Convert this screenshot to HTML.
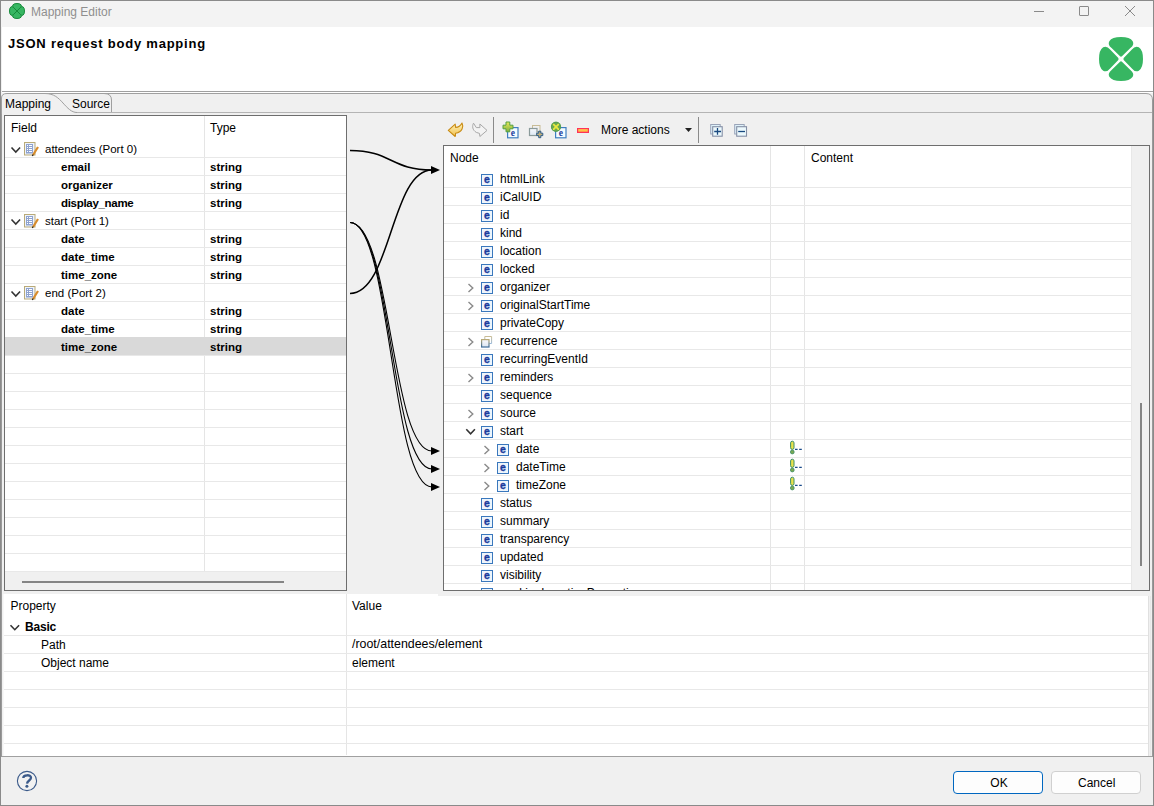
<!DOCTYPE html><html><head><meta charset="utf-8"><style>
html,body{margin:0;padding:0}
body{width:1154px;height:806px;overflow:hidden;position:relative;background:#f0f0f0;font-family:"Liberation Sans",sans-serif}
.t{position:absolute;white-space:nowrap;line-height:20px}
.r{position:absolute;box-sizing:border-box}
svg.r{overflow:visible}
</style></head><body>
<div class="r" style="left:0px;top:0px;width:1154px;height:806px;background:#f0f0f0"></div>
<div class="r" style="left:1px;top:1px;width:1152px;height:26px;background:#f3f3f3"></div>
<div class="r" style="left:2px;top:27px;width:1151px;height:64px;background:#fff"></div>
<div class="r" style="left:2px;top:91px;width:1151px;height:1px;background:#a0a0a0"></div>
<div class="r" style="left:2px;top:92px;width:1151px;height:1px;background:#fff"></div>
<div class="r" style="left:0px;top:0px;width:1154px;height:1px;background:#8a8a8a"></div>
<div class="r" style="left:0px;top:0px;width:1px;height:806px;background:#8a8a8a"></div>
<div class="r" style="left:1px;top:98px;width:1px;height:659px;background:#9a9a9a"></div>
<div class="r" style="left:1153px;top:0px;width:1px;height:806px;background:#8a8a8a"></div>
<div class="r" style="left:1152px;top:99px;width:1px;height:658px;background:#9a9a9a"></div>
<div class="r" style="left:0px;top:805px;width:1154px;height:1px;background:#8a8a8a"></div>
<svg class="r" style="left:0px;top:0px" width="60" height="30" viewBox="0 0 60 30"><g transform="translate(9,3) scale(0.3404255319148936) translate(1.5,1.5)"><path d="M11 11 Q7.8 7.8 10 4 Q13 0 22 0 Q31 0 34 4 Q36.2 7.8 33 11 L22 22 Z" fill="#37b662" stroke="#15893a" stroke-width="2.9" stroke-linejoin="round" transform="rotate(0 22 22)"/><path d="M11 11 Q7.8 7.8 10 4 Q13 0 22 0 Q31 0 34 4 Q36.2 7.8 33 11 L22 22 Z" fill="#37b662" stroke="#15893a" stroke-width="2.9" stroke-linejoin="round" transform="rotate(90 22 22)"/><path d="M11 11 Q7.8 7.8 10 4 Q13 0 22 0 Q31 0 34 4 Q36.2 7.8 33 11 L22 22 Z" fill="#37b662" stroke="#15893a" stroke-width="2.9" stroke-linejoin="round" transform="rotate(180 22 22)"/><path d="M11 11 Q7.8 7.8 10 4 Q13 0 22 0 Q31 0 34 4 Q36.2 7.8 33 11 L22 22 Z" fill="#37b662" stroke="#15893a" stroke-width="2.9" stroke-linejoin="round" transform="rotate(270 22 22)"/></g></svg>
<div class="t" style="left:31px;top:2.03px;font-size:12px;font-weight:400;color:#8f8f8f;letter-spacing:0px;">Mapping Editor</div>
<div class="r" style="left:1034px;top:11px;width:10px;height:1px;background:#8a8a8a"></div>
<div class="r" style="left:1079px;top:6px;width:10px;height:10px;border:1px solid #8a8a8a;border-radius:1px"></div>
<svg class="r" style="left:1124px;top:5px" width="12" height="12" viewBox="0 0 12 12"><path d="M1 1 L11 11 M11 1 L1 11" stroke="#8a8a8a" stroke-width="1"/></svg>
<div class="t" style="left:8px;top:33.70px;font-size:13px;font-weight:700;color:#000;letter-spacing:0.78px;">JSON request body mapping</div>
<svg class="r" style="left:1099px;top:37px" width="44" height="44" viewBox="0 0 44 44"><g transform="translate(0,0) scale(1.0)"><path d="M12.6 11.1 Q8.4 7.8 10.3 4.2 Q13 0 22 0 Q31 0 33.7 4.2 Q35.6 7.8 31.4 11.1 L23.2 19.1 Q22 20.2 20.8 19.1 Z" fill="#37b662" transform="rotate(0 22 22)"/><path d="M12.6 11.1 Q8.4 7.8 10.3 4.2 Q13 0 22 0 Q31 0 33.7 4.2 Q35.6 7.8 31.4 11.1 L23.2 19.1 Q22 20.2 20.8 19.1 Z" fill="#37b662" transform="rotate(90 22 22)"/><path d="M12.6 11.1 Q8.4 7.8 10.3 4.2 Q13 0 22 0 Q31 0 33.7 4.2 Q35.6 7.8 31.4 11.1 L23.2 19.1 Q22 20.2 20.8 19.1 Z" fill="#37b662" transform="rotate(180 22 22)"/><path d="M12.6 11.1 Q8.4 7.8 10.3 4.2 Q13 0 22 0 Q31 0 33.7 4.2 Q35.6 7.8 31.4 11.1 L23.2 19.1 Q22 20.2 20.8 19.1 Z" fill="#37b662" transform="rotate(270 22 22)"/></g></svg>
<svg class="r" style="left:0px;top:90px" width="1154" height="30" viewBox="0 0 1154 30"><path d="M76 22.5 L1152 22.5" stroke="#b4b4b4" stroke-width="1" fill="none"/><path d="M45 3.5 L1146 3.5 Q1152.5 3.5 1152.5 10" stroke="#a0a0a0" stroke-width="1" fill="none"/><path d="M1.5 24 L1.5 8 Q1.5 3.5 7 3.5 L45 3.5 C54 3.5 58.5 8 63 13 C67.5 18 71.5 22.5 77 22.5" stroke="#a0a0a0" stroke-width="1" fill="#f0f0f0"/><path d="M111.5 22 L111.5 10 Q111.5 3.5 104 3.5" stroke="#a0a0a0" stroke-width="1" fill="none"/></svg>
<div class="t" style="left:5px;top:93.53px;font-size:12px;font-weight:400;color:#000;letter-spacing:0px;">Mapping</div>
<div class="t" style="left:72px;top:93.53px;font-size:12px;font-weight:400;color:#000;letter-spacing:0px;">Source</div>
<div class="r" style="left:4px;top:115px;width:343px;height:476px;border:1px solid #6e6e6e;background:#fff"></div>
<div class="r" style="left:5px;top:572px;width:341px;height:18px;background:#f0f0f0"></div>
<div class="r" style="left:22px;top:581px;width:262px;height:2px;background:#858585"></div>
<div class="r" style="left:204px;top:116px;width:1px;height:456px;background:#e5e5e5"></div>
<div class="r" style="left:5px;top:157px;width:341px;height:1px;background:#e8e8e8"></div>
<div class="r" style="left:5px;top:175px;width:341px;height:1px;background:#e8e8e8"></div>
<div class="r" style="left:5px;top:193px;width:341px;height:1px;background:#e8e8e8"></div>
<div class="r" style="left:5px;top:211px;width:341px;height:1px;background:#e8e8e8"></div>
<div class="r" style="left:5px;top:229px;width:341px;height:1px;background:#e8e8e8"></div>
<div class="r" style="left:5px;top:247px;width:341px;height:1px;background:#e8e8e8"></div>
<div class="r" style="left:5px;top:265px;width:341px;height:1px;background:#e8e8e8"></div>
<div class="r" style="left:5px;top:283px;width:341px;height:1px;background:#e8e8e8"></div>
<div class="r" style="left:5px;top:301px;width:341px;height:1px;background:#e8e8e8"></div>
<div class="r" style="left:5px;top:319px;width:341px;height:1px;background:#e8e8e8"></div>
<div class="r" style="left:5px;top:337px;width:341px;height:1px;background:#e8e8e8"></div>
<div class="r" style="left:5px;top:355px;width:341px;height:1px;background:#e8e8e8"></div>
<div class="r" style="left:5px;top:373px;width:341px;height:1px;background:#e8e8e8"></div>
<div class="r" style="left:5px;top:391px;width:341px;height:1px;background:#e8e8e8"></div>
<div class="r" style="left:5px;top:409px;width:341px;height:1px;background:#e8e8e8"></div>
<div class="r" style="left:5px;top:427px;width:341px;height:1px;background:#e8e8e8"></div>
<div class="r" style="left:5px;top:445px;width:341px;height:1px;background:#e8e8e8"></div>
<div class="r" style="left:5px;top:463px;width:341px;height:1px;background:#e8e8e8"></div>
<div class="r" style="left:5px;top:481px;width:341px;height:1px;background:#e8e8e8"></div>
<div class="r" style="left:5px;top:499px;width:341px;height:1px;background:#e8e8e8"></div>
<div class="r" style="left:5px;top:517px;width:341px;height:1px;background:#e8e8e8"></div>
<div class="r" style="left:5px;top:535px;width:341px;height:1px;background:#e8e8e8"></div>
<div class="r" style="left:5px;top:553px;width:341px;height:1px;background:#e8e8e8"></div>
<div class="r" style="left:5px;top:571px;width:341px;height:1px;background:#e8e8e8"></div>
<div class="r" style="left:5px;top:337px;width:341px;height:18px;background:#d9d9d9"></div>
<div class="r" style="left:204px;top:337px;width:1px;height:18px;background:#d9d9d9"></div>
<div class="t" style="left:11px;top:117.73px;font-size:12px;font-weight:400;color:#000;letter-spacing:0px;">Field</div>
<div class="t" style="left:210px;top:117.73px;font-size:12px;font-weight:400;color:#000;letter-spacing:0px;">Type</div>
<svg class="r" style="left:0px;top:0px" width="1" height="1" viewBox="0 0 1 1"><path d="M11.5 147.5 L15.8 152.0 L20.1 147.5" stroke="#333" stroke-width="1.6" fill="none"/><g transform="translate(24,142)"><rect x="0.5" y="0.5" width="10.5" height="12.5" fill="#eef3fb" stroke="#b9aa78"/><rect x="2" y="2" width="7" height="9.5" fill="#8fa3cf"/><path d="M3 3.5h1M5 3.5h3M3 5.5h1M5 5.5h3M3 7.5h1M5 7.5h3M3 9.5h1M5 9.5h3" stroke="#fff" stroke-width="1"/><path d="M9 13 L14 5" stroke="#d88c2c" stroke-width="2.2"/><path d="M8.3 14 L9.2 12.5" stroke="#222" stroke-width="1.2"/></g></svg>
<div class="t" style="left:45px;top:138.70px;font-size:11.5px;font-weight:400;color:#000;letter-spacing:0px;">attendees (Port 0)</div>
<div class="t" style="left:61px;top:156.70px;font-size:11.5px;font-weight:700;color:#000;letter-spacing:0px;">email</div>
<div class="t" style="left:210px;top:156.70px;font-size:11.5px;font-weight:700;color:#000;letter-spacing:0px;">string</div>
<div class="t" style="left:61px;top:174.70px;font-size:11.5px;font-weight:700;color:#000;letter-spacing:0px;">organizer</div>
<div class="t" style="left:210px;top:174.70px;font-size:11.5px;font-weight:700;color:#000;letter-spacing:0px;">string</div>
<div class="t" style="left:61px;top:192.70px;font-size:11.5px;font-weight:700;color:#000;letter-spacing:-0.3px;">display_name</div>
<div class="t" style="left:210px;top:192.70px;font-size:11.5px;font-weight:700;color:#000;letter-spacing:0px;">string</div>
<svg class="r" style="left:0px;top:0px" width="1" height="1" viewBox="0 0 1 1"><path d="M11.5 219.5 L15.8 224.0 L20.1 219.5" stroke="#333" stroke-width="1.6" fill="none"/><g transform="translate(24,214)"><rect x="0.5" y="0.5" width="10.5" height="12.5" fill="#eef3fb" stroke="#b9aa78"/><rect x="2" y="2" width="7" height="9.5" fill="#8fa3cf"/><path d="M3 3.5h1M5 3.5h3M3 5.5h1M5 5.5h3M3 7.5h1M5 7.5h3M3 9.5h1M5 9.5h3" stroke="#fff" stroke-width="1"/><path d="M9 13 L14 5" stroke="#d88c2c" stroke-width="2.2"/><path d="M8.3 14 L9.2 12.5" stroke="#222" stroke-width="1.2"/></g></svg>
<div class="t" style="left:45px;top:210.70px;font-size:11.5px;font-weight:400;color:#000;letter-spacing:0px;">start (Port 1)</div>
<div class="t" style="left:61px;top:228.70px;font-size:11.5px;font-weight:700;color:#000;letter-spacing:0px;">date</div>
<div class="t" style="left:210px;top:228.70px;font-size:11.5px;font-weight:700;color:#000;letter-spacing:0px;">string</div>
<div class="t" style="left:61px;top:246.70px;font-size:11.5px;font-weight:700;color:#000;letter-spacing:0px;">date_time</div>
<div class="t" style="left:210px;top:246.70px;font-size:11.5px;font-weight:700;color:#000;letter-spacing:0px;">string</div>
<div class="t" style="left:61px;top:264.70px;font-size:11.5px;font-weight:700;color:#000;letter-spacing:0px;">time_zone</div>
<div class="t" style="left:210px;top:264.70px;font-size:11.5px;font-weight:700;color:#000;letter-spacing:0px;">string</div>
<svg class="r" style="left:0px;top:0px" width="1" height="1" viewBox="0 0 1 1"><path d="M11.5 291.5 L15.8 296.0 L20.1 291.5" stroke="#333" stroke-width="1.6" fill="none"/><g transform="translate(24,286)"><rect x="0.5" y="0.5" width="10.5" height="12.5" fill="#eef3fb" stroke="#b9aa78"/><rect x="2" y="2" width="7" height="9.5" fill="#8fa3cf"/><path d="M3 3.5h1M5 3.5h3M3 5.5h1M5 5.5h3M3 7.5h1M5 7.5h3M3 9.5h1M5 9.5h3" stroke="#fff" stroke-width="1"/><path d="M9 13 L14 5" stroke="#d88c2c" stroke-width="2.2"/><path d="M8.3 14 L9.2 12.5" stroke="#222" stroke-width="1.2"/></g></svg>
<div class="t" style="left:45px;top:282.70px;font-size:11.5px;font-weight:400;color:#000;letter-spacing:0px;">end (Port 2)</div>
<div class="t" style="left:61px;top:300.70px;font-size:11.5px;font-weight:700;color:#000;letter-spacing:0px;">date</div>
<div class="t" style="left:210px;top:300.70px;font-size:11.5px;font-weight:700;color:#000;letter-spacing:0px;">string</div>
<div class="t" style="left:61px;top:318.70px;font-size:11.5px;font-weight:700;color:#000;letter-spacing:0px;">date_time</div>
<div class="t" style="left:210px;top:318.70px;font-size:11.5px;font-weight:700;color:#000;letter-spacing:0px;">string</div>
<div class="t" style="left:61px;top:336.70px;font-size:11.5px;font-weight:700;color:#000;letter-spacing:0px;">time_zone</div>
<div class="t" style="left:210px;top:336.70px;font-size:11.5px;font-weight:700;color:#000;letter-spacing:0px;">string</div>
<svg class="r" style="left:446px;top:118px" width="46" height="24" viewBox="0 0 46 24"><defs><linearGradient id="gy" x1="0" y1="0" x2="0" y2="1"><stop offset="0" stop-color="#fff3b8"/><stop offset="1" stop-color="#f0c050"/></linearGradient></defs><path d="M2.3 12.4 L9.2 6.2 L9.6 9.4 C12 9.4 14.5 8 16 5 C17.8 8.5 16.5 14 9.6 15.2 L9.2 18.5 Z" fill="url(#gy)" stroke="#c88a12" stroke-width="1.1" stroke-linejoin="round"/><path d="M41 12.4 L33.9 6 L33.9 9.6 L30.3 9.6 L27.5 5.2 C26 8 26.3 12 30.3 14.4 L33.5 15.4 L33.9 18.5 Z" fill="#f3f3f3" stroke="#a8a8a8" stroke-width="1" stroke-linejoin="round"/></svg>
<svg class="r" style="left:500px;top:118px" width="46" height="24" viewBox="0 0 46 24"><g transform="translate(7,9)"><rect x="0.6" y="0.6" width="10.4" height="10.2" fill="#f4fbff" stroke="#3f7fc0" stroke-width="1.2"/><text x="5.9" y="8.6" text-anchor="middle" font-family="Liberation Serif" font-weight="700" font-size="9.5" fill="#1a3a9a">e</text></g><defs><linearGradient id="gg" x1="0" y1="0" x2="0" y2="1"><stop offset="0" stop-color="#e8e858"/><stop offset="1" stop-color="#7fb040"/></linearGradient><linearGradient id="gb" x1="0" y1="0" x2="0" y2="1"><stop offset="0" stop-color="#f6f8fc"/><stop offset="1" stop-color="#dde8f4"/></linearGradient></defs><path d="M6 4 H9.8 V7.2 H13 V10.8 H9.8 V13.8 H6 V10.8 H3 V7.2 H6 Z" fill="url(#gg)" stroke="#55a040" stroke-width="1" stroke-linejoin="round"/><rect x="32.5" y="7.5" width="7.5" height="6" fill="none" stroke="#c8bc96" stroke-width="1"/><rect x="29.5" y="10.5" width="7.5" height="7" fill="url(#gb)" stroke="#8a9a9a" stroke-width="1.2"/><path d="M38.7 13.2 H40.8 V15.2 H42.8 V17.6 H40.8 V19.7 H38.7 V17.6 H36.7 V15.2 H38.7 Z" fill="#c4b078" stroke="#2a5a8a" stroke-width="1"/></svg>
<svg class="r" style="left:548px;top:118px" width="46" height="24" viewBox="0 0 46 24"><g transform="translate(7,9)"><rect x="0.6" y="0.6" width="10.4" height="10.2" fill="#f4fbff" stroke="#3f7fc0" stroke-width="1.2"/><text x="5.9" y="8.6" text-anchor="middle" font-family="Liberation Serif" font-weight="700" font-size="9.5" fill="#1a3a9a">e</text></g><circle cx="8" cy="8.8" r="5" fill="#6aa850"/><path d="M5 5.8 L11 11.8 M11 5.8 L5 11.8" stroke="#e8e840" stroke-width="1.8"/><circle cx="8" cy="8.8" r="4.6" fill="none" stroke="#4f9a50" stroke-width="0.8"/><defs><linearGradient id="go" x1="0" y1="0" x2="0" y2="1"><stop offset="0" stop-color="#ffe850"/><stop offset="1" stop-color="#ffa040"/></linearGradient></defs><rect x="29.6" y="10.6" width="10.8" height="3.8" fill="url(#go)" stroke="#ff3358" stroke-width="1.2"/></svg>
<svg class="r" style="left:704px;top:118px" width="46" height="24" viewBox="0 0 46 24"><rect x="6.7" y="6.5" width="9.5" height="9.5" fill="#dff2fa" stroke="#9aa4b8" stroke-width="1"/><rect x="8.7" y="8.7" width="9.5" height="9.5" fill="#ecf9fd" stroke="#858fa5" stroke-width="1.1"/><path d="M10.2 13.5 H17 M13.5 10 V16.8" stroke="#1a4a80" stroke-width="1.3"/><rect x="30.7" y="6.5" width="9.5" height="9.5" fill="#dff2fa" stroke="#9aa4b8" stroke-width="1"/><rect x="32.7" y="8.7" width="9.8" height="9.5" fill="#ecf9fd" stroke="#858fa5" stroke-width="1.1"/><path d="M34.2 13.5 H41" stroke="#1a4a80" stroke-width="1.3"/></svg>
<div class="r" style="left:493px;top:117px;width:1px;height:26px;background:#8a8a8a"></div>
<div class="r" style="left:698px;top:117px;width:1px;height:26px;background:#8a8a8a"></div>
<div class="t" style="left:601px;top:120.03px;font-size:12px;font-weight:400;color:#000;letter-spacing:0px;">More actions</div>
<svg class="r" style="left:685px;top:128px" width="8" height="5" viewBox="0 0 8 5"><path d="M0 0 L7 0 L3.5 4 Z" fill="#222"/></svg>
<div class="r" style="left:443px;top:145px;width:707px;height:446px;border:1px solid #6e6e6e;background:#fff"></div>
<div class="r" style="left:1131px;top:146px;width:1px;height:444px;background:#e8e8e8"></div>
<div class="r" style="left:1132px;top:146px;width:17px;height:444px;background:#f0f0f0"></div>
<div class="r" style="left:1140px;top:403px;width:2px;height:163px;background:#858585"></div>
<div class="r" style="left:770px;top:146px;width:1px;height:444px;background:#e5e5e5"></div>
<div class="r" style="left:804px;top:146px;width:1px;height:444px;background:#e5e5e5"></div>
<div class="r" style="left:444px;top:187px;width:687px;height:1px;background:#e8e8e8"></div>
<div class="r" style="left:444px;top:205px;width:687px;height:1px;background:#e8e8e8"></div>
<div class="r" style="left:444px;top:223px;width:687px;height:1px;background:#e8e8e8"></div>
<div class="r" style="left:444px;top:241px;width:687px;height:1px;background:#e8e8e8"></div>
<div class="r" style="left:444px;top:259px;width:687px;height:1px;background:#e8e8e8"></div>
<div class="r" style="left:444px;top:277px;width:687px;height:1px;background:#e8e8e8"></div>
<div class="r" style="left:444px;top:295px;width:687px;height:1px;background:#e8e8e8"></div>
<div class="r" style="left:444px;top:313px;width:687px;height:1px;background:#e8e8e8"></div>
<div class="r" style="left:444px;top:331px;width:687px;height:1px;background:#e8e8e8"></div>
<div class="r" style="left:444px;top:349px;width:687px;height:1px;background:#e8e8e8"></div>
<div class="r" style="left:444px;top:367px;width:687px;height:1px;background:#e8e8e8"></div>
<div class="r" style="left:444px;top:385px;width:687px;height:1px;background:#e8e8e8"></div>
<div class="r" style="left:444px;top:403px;width:687px;height:1px;background:#e8e8e8"></div>
<div class="r" style="left:444px;top:421px;width:687px;height:1px;background:#e8e8e8"></div>
<div class="r" style="left:444px;top:439px;width:687px;height:1px;background:#e8e8e8"></div>
<div class="r" style="left:444px;top:457px;width:687px;height:1px;background:#e8e8e8"></div>
<div class="r" style="left:444px;top:475px;width:687px;height:1px;background:#e8e8e8"></div>
<div class="r" style="left:444px;top:493px;width:687px;height:1px;background:#e8e8e8"></div>
<div class="r" style="left:444px;top:511px;width:687px;height:1px;background:#e8e8e8"></div>
<div class="r" style="left:444px;top:529px;width:687px;height:1px;background:#e8e8e8"></div>
<div class="r" style="left:444px;top:547px;width:687px;height:1px;background:#e8e8e8"></div>
<div class="r" style="left:444px;top:565px;width:687px;height:1px;background:#e8e8e8"></div>
<div class="r" style="left:444px;top:583px;width:687px;height:1px;background:#e8e8e8"></div>
<div class="t" style="left:450px;top:147.83px;font-size:12px;font-weight:400;color:#000;letter-spacing:0px;">Node</div>
<div class="t" style="left:811px;top:147.83px;font-size:12px;font-weight:400;color:#000;letter-spacing:0px;">Content</div>
<svg class="r" style="left:0px;top:0px" width="1" height="1" viewBox="0 0 1 1"><g transform="translate(481,174)"><rect x="0.5" y="0.5" width="11" height="11" fill="#eef5fc" stroke="#3a78bd"/><text x="6" y="9.3" text-anchor="middle" font-family="Liberation Sans" font-weight="700" font-size="10.5" fill="#1a3c9c" stroke="#1a3c9c" stroke-width="0.35">e</text></g></svg>
<div class="t" style="left:500px;top:168.73px;font-size:12px;font-weight:400;color:#000;letter-spacing:0px;">htmlLink</div>
<svg class="r" style="left:0px;top:0px" width="1" height="1" viewBox="0 0 1 1"><g transform="translate(481,192)"><rect x="0.5" y="0.5" width="11" height="11" fill="#eef5fc" stroke="#3a78bd"/><text x="6" y="9.3" text-anchor="middle" font-family="Liberation Sans" font-weight="700" font-size="10.5" fill="#1a3c9c" stroke="#1a3c9c" stroke-width="0.35">e</text></g></svg>
<div class="t" style="left:500px;top:186.73px;font-size:12px;font-weight:400;color:#000;letter-spacing:0px;">iCalUID</div>
<svg class="r" style="left:0px;top:0px" width="1" height="1" viewBox="0 0 1 1"><g transform="translate(481,210)"><rect x="0.5" y="0.5" width="11" height="11" fill="#eef5fc" stroke="#3a78bd"/><text x="6" y="9.3" text-anchor="middle" font-family="Liberation Sans" font-weight="700" font-size="10.5" fill="#1a3c9c" stroke="#1a3c9c" stroke-width="0.35">e</text></g></svg>
<div class="t" style="left:500px;top:204.73px;font-size:12px;font-weight:400;color:#000;letter-spacing:0px;">id</div>
<svg class="r" style="left:0px;top:0px" width="1" height="1" viewBox="0 0 1 1"><g transform="translate(481,228)"><rect x="0.5" y="0.5" width="11" height="11" fill="#eef5fc" stroke="#3a78bd"/><text x="6" y="9.3" text-anchor="middle" font-family="Liberation Sans" font-weight="700" font-size="10.5" fill="#1a3c9c" stroke="#1a3c9c" stroke-width="0.35">e</text></g></svg>
<div class="t" style="left:500px;top:222.73px;font-size:12px;font-weight:400;color:#000;letter-spacing:0px;">kind</div>
<svg class="r" style="left:0px;top:0px" width="1" height="1" viewBox="0 0 1 1"><g transform="translate(481,246)"><rect x="0.5" y="0.5" width="11" height="11" fill="#eef5fc" stroke="#3a78bd"/><text x="6" y="9.3" text-anchor="middle" font-family="Liberation Sans" font-weight="700" font-size="10.5" fill="#1a3c9c" stroke="#1a3c9c" stroke-width="0.35">e</text></g></svg>
<div class="t" style="left:500px;top:240.73px;font-size:12px;font-weight:400;color:#000;letter-spacing:0px;">location</div>
<svg class="r" style="left:0px;top:0px" width="1" height="1" viewBox="0 0 1 1"><g transform="translate(481,264)"><rect x="0.5" y="0.5" width="11" height="11" fill="#eef5fc" stroke="#3a78bd"/><text x="6" y="9.3" text-anchor="middle" font-family="Liberation Sans" font-weight="700" font-size="10.5" fill="#1a3c9c" stroke="#1a3c9c" stroke-width="0.35">e</text></g></svg>
<div class="t" style="left:500px;top:258.73px;font-size:12px;font-weight:400;color:#000;letter-spacing:0px;">locked</div>
<svg class="r" style="left:0px;top:0px" width="1" height="1" viewBox="0 0 1 1"><path d="M468.5 284 L472.8 288 L468.5 292" stroke="#8a8a8a" stroke-width="1.4" fill="none"/><g transform="translate(481,282)"><rect x="0.5" y="0.5" width="11" height="11" fill="#eef5fc" stroke="#3a78bd"/><text x="6" y="9.3" text-anchor="middle" font-family="Liberation Sans" font-weight="700" font-size="10.5" fill="#1a3c9c" stroke="#1a3c9c" stroke-width="0.35">e</text></g></svg>
<div class="t" style="left:500px;top:276.73px;font-size:12px;font-weight:400;color:#000;letter-spacing:0px;">organizer</div>
<svg class="r" style="left:0px;top:0px" width="1" height="1" viewBox="0 0 1 1"><path d="M468.5 302 L472.8 306 L468.5 310" stroke="#8a8a8a" stroke-width="1.4" fill="none"/><g transform="translate(481,300)"><rect x="0.5" y="0.5" width="11" height="11" fill="#eef5fc" stroke="#3a78bd"/><text x="6" y="9.3" text-anchor="middle" font-family="Liberation Sans" font-weight="700" font-size="10.5" fill="#1a3c9c" stroke="#1a3c9c" stroke-width="0.35">e</text></g></svg>
<div class="t" style="left:500px;top:294.73px;font-size:12px;font-weight:400;color:#000;letter-spacing:0px;">originalStartTime</div>
<svg class="r" style="left:0px;top:0px" width="1" height="1" viewBox="0 0 1 1"><g transform="translate(481,318)"><rect x="0.5" y="0.5" width="11" height="11" fill="#eef5fc" stroke="#3a78bd"/><text x="6" y="9.3" text-anchor="middle" font-family="Liberation Sans" font-weight="700" font-size="10.5" fill="#1a3c9c" stroke="#1a3c9c" stroke-width="0.35">e</text></g></svg>
<div class="t" style="left:500px;top:312.73px;font-size:12px;font-weight:400;color:#000;letter-spacing:0px;">privateCopy</div>
<svg class="r" style="left:0px;top:0px" width="1" height="1" viewBox="0 0 1 1"><path d="M468.5 338 L472.8 342 L468.5 346" stroke="#8a8a8a" stroke-width="1.4" fill="none"/><g transform="translate(481,331)"><defs><linearGradient id="rs{i}" x1="0" y1="0" x2="0" y2="1"><stop offset="0" stop-color="#b9aa78"/><stop offset="1" stop-color="#3a6a9a"/></linearGradient><linearGradient id="rb{i}" x1="0" y1="0" x2="0" y2="1"><stop offset="0" stop-color="#c8bc96"/><stop offset="1" stop-color="#9ab8d8"/></linearGradient><linearGradient id="rf{i}" x1="0" y1="0" x2="0" y2="1"><stop offset="0" stop-color="#f8f8fa"/><stop offset="1" stop-color="#dde6f2"/></linearGradient></defs><path d="M3.8 8 V5.5 H10.6 V12.5 H8.2" stroke="url(#rb{i})" stroke-width="1" fill="none"/><rect x="0.6" y="8.6" width="7.4" height="7.4" fill="url(#rf{i})" stroke="url(#rs{i})" stroke-width="1.2"/></g></svg>
<div class="t" style="left:500px;top:330.73px;font-size:12px;font-weight:400;color:#000;letter-spacing:0px;">recurrence</div>
<svg class="r" style="left:0px;top:0px" width="1" height="1" viewBox="0 0 1 1"><g transform="translate(481,354)"><rect x="0.5" y="0.5" width="11" height="11" fill="#eef5fc" stroke="#3a78bd"/><text x="6" y="9.3" text-anchor="middle" font-family="Liberation Sans" font-weight="700" font-size="10.5" fill="#1a3c9c" stroke="#1a3c9c" stroke-width="0.35">e</text></g></svg>
<div class="t" style="left:500px;top:348.73px;font-size:12px;font-weight:400;color:#000;letter-spacing:0px;">recurringEventId</div>
<svg class="r" style="left:0px;top:0px" width="1" height="1" viewBox="0 0 1 1"><path d="M468.5 374 L472.8 378 L468.5 382" stroke="#8a8a8a" stroke-width="1.4" fill="none"/><g transform="translate(481,372)"><rect x="0.5" y="0.5" width="11" height="11" fill="#eef5fc" stroke="#3a78bd"/><text x="6" y="9.3" text-anchor="middle" font-family="Liberation Sans" font-weight="700" font-size="10.5" fill="#1a3c9c" stroke="#1a3c9c" stroke-width="0.35">e</text></g></svg>
<div class="t" style="left:500px;top:366.73px;font-size:12px;font-weight:400;color:#000;letter-spacing:0px;">reminders</div>
<svg class="r" style="left:0px;top:0px" width="1" height="1" viewBox="0 0 1 1"><g transform="translate(481,390)"><rect x="0.5" y="0.5" width="11" height="11" fill="#eef5fc" stroke="#3a78bd"/><text x="6" y="9.3" text-anchor="middle" font-family="Liberation Sans" font-weight="700" font-size="10.5" fill="#1a3c9c" stroke="#1a3c9c" stroke-width="0.35">e</text></g></svg>
<div class="t" style="left:500px;top:384.73px;font-size:12px;font-weight:400;color:#000;letter-spacing:0px;">sequence</div>
<svg class="r" style="left:0px;top:0px" width="1" height="1" viewBox="0 0 1 1"><path d="M468.5 410 L472.8 414 L468.5 418" stroke="#8a8a8a" stroke-width="1.4" fill="none"/><g transform="translate(481,408)"><rect x="0.5" y="0.5" width="11" height="11" fill="#eef5fc" stroke="#3a78bd"/><text x="6" y="9.3" text-anchor="middle" font-family="Liberation Sans" font-weight="700" font-size="10.5" fill="#1a3c9c" stroke="#1a3c9c" stroke-width="0.35">e</text></g></svg>
<div class="t" style="left:500px;top:402.73px;font-size:12px;font-weight:400;color:#000;letter-spacing:0px;">source</div>
<svg class="r" style="left:0px;top:0px" width="1" height="1" viewBox="0 0 1 1"><path d="M466.3 429.3 L470.6 433.8 L474.90000000000003 429.3" stroke="#333" stroke-width="1.6" fill="none"/><g transform="translate(481,426)"><rect x="0.5" y="0.5" width="11" height="11" fill="#eef5fc" stroke="#3a78bd"/><text x="6" y="9.3" text-anchor="middle" font-family="Liberation Sans" font-weight="700" font-size="10.5" fill="#1a3c9c" stroke="#1a3c9c" stroke-width="0.35">e</text></g></svg>
<div class="t" style="left:500px;top:420.73px;font-size:12px;font-weight:400;color:#000;letter-spacing:0px;">start</div>
<svg class="r" style="left:0px;top:0px" width="1" height="1" viewBox="0 0 1 1"><path d="M484.5 446 L488.8 450 L484.5 454" stroke="#8a8a8a" stroke-width="1.4" fill="none"/><g transform="translate(497,444)"><rect x="0.5" y="0.5" width="11" height="11" fill="#eef5fc" stroke="#3a78bd"/><text x="6" y="9.3" text-anchor="middle" font-family="Liberation Sans" font-weight="700" font-size="10.5" fill="#1a3c9c" stroke="#1a3c9c" stroke-width="0.35">e</text></g></svg>
<div class="t" style="left:516px;top:438.73px;font-size:12px;font-weight:400;color:#000;letter-spacing:0px;">date</div>
<svg class="r" style="left:789px;top:440px" width="14" height="16" viewBox="0 0 14 16"><rect x="1.6" y="1.2" width="3.4" height="8.2" rx="1.7" fill="#e8e24c" stroke="#3d8f6a" stroke-width="1"/><circle cx="3.3" cy="12" r="1.9" fill="#7aa850" stroke="#3d8f6a" stroke-width="0.8"/><path d="M6 9.3 h2.6 M10.2 9.3 h2.6" stroke="#1a4a8a" stroke-width="1.2"/></svg>
<svg class="r" style="left:0px;top:0px" width="1" height="1" viewBox="0 0 1 1"><path d="M484.5 464 L488.8 468 L484.5 472" stroke="#8a8a8a" stroke-width="1.4" fill="none"/><g transform="translate(497,462)"><rect x="0.5" y="0.5" width="11" height="11" fill="#eef5fc" stroke="#3a78bd"/><text x="6" y="9.3" text-anchor="middle" font-family="Liberation Sans" font-weight="700" font-size="10.5" fill="#1a3c9c" stroke="#1a3c9c" stroke-width="0.35">e</text></g></svg>
<div class="t" style="left:516px;top:456.73px;font-size:12px;font-weight:400;color:#000;letter-spacing:0px;">dateTime</div>
<svg class="r" style="left:789px;top:458px" width="14" height="16" viewBox="0 0 14 16"><rect x="1.6" y="1.2" width="3.4" height="8.2" rx="1.7" fill="#e8e24c" stroke="#3d8f6a" stroke-width="1"/><circle cx="3.3" cy="12" r="1.9" fill="#7aa850" stroke="#3d8f6a" stroke-width="0.8"/><path d="M6 9.3 h2.6 M10.2 9.3 h2.6" stroke="#1a4a8a" stroke-width="1.2"/></svg>
<svg class="r" style="left:0px;top:0px" width="1" height="1" viewBox="0 0 1 1"><path d="M484.5 482 L488.8 486 L484.5 490" stroke="#8a8a8a" stroke-width="1.4" fill="none"/><g transform="translate(497,480)"><rect x="0.5" y="0.5" width="11" height="11" fill="#eef5fc" stroke="#3a78bd"/><text x="6" y="9.3" text-anchor="middle" font-family="Liberation Sans" font-weight="700" font-size="10.5" fill="#1a3c9c" stroke="#1a3c9c" stroke-width="0.35">e</text></g></svg>
<div class="t" style="left:516px;top:474.73px;font-size:12px;font-weight:400;color:#000;letter-spacing:0px;">timeZone</div>
<svg class="r" style="left:789px;top:476px" width="14" height="16" viewBox="0 0 14 16"><rect x="1.6" y="1.2" width="3.4" height="8.2" rx="1.7" fill="#e8e24c" stroke="#3d8f6a" stroke-width="1"/><circle cx="3.3" cy="12" r="1.9" fill="#7aa850" stroke="#3d8f6a" stroke-width="0.8"/><path d="M6 9.3 h2.6 M10.2 9.3 h2.6" stroke="#1a4a8a" stroke-width="1.2"/></svg>
<svg class="r" style="left:0px;top:0px" width="1" height="1" viewBox="0 0 1 1"><g transform="translate(481,498)"><rect x="0.5" y="0.5" width="11" height="11" fill="#eef5fc" stroke="#3a78bd"/><text x="6" y="9.3" text-anchor="middle" font-family="Liberation Sans" font-weight="700" font-size="10.5" fill="#1a3c9c" stroke="#1a3c9c" stroke-width="0.35">e</text></g></svg>
<div class="t" style="left:500px;top:492.73px;font-size:12px;font-weight:400;color:#000;letter-spacing:0px;">status</div>
<svg class="r" style="left:0px;top:0px" width="1" height="1" viewBox="0 0 1 1"><g transform="translate(481,516)"><rect x="0.5" y="0.5" width="11" height="11" fill="#eef5fc" stroke="#3a78bd"/><text x="6" y="9.3" text-anchor="middle" font-family="Liberation Sans" font-weight="700" font-size="10.5" fill="#1a3c9c" stroke="#1a3c9c" stroke-width="0.35">e</text></g></svg>
<div class="t" style="left:500px;top:510.73px;font-size:12px;font-weight:400;color:#000;letter-spacing:0px;">summary</div>
<svg class="r" style="left:0px;top:0px" width="1" height="1" viewBox="0 0 1 1"><g transform="translate(481,534)"><rect x="0.5" y="0.5" width="11" height="11" fill="#eef5fc" stroke="#3a78bd"/><text x="6" y="9.3" text-anchor="middle" font-family="Liberation Sans" font-weight="700" font-size="10.5" fill="#1a3c9c" stroke="#1a3c9c" stroke-width="0.35">e</text></g></svg>
<div class="t" style="left:500px;top:528.73px;font-size:12px;font-weight:400;color:#000;letter-spacing:0px;">transparency</div>
<svg class="r" style="left:0px;top:0px" width="1" height="1" viewBox="0 0 1 1"><g transform="translate(481,552)"><rect x="0.5" y="0.5" width="11" height="11" fill="#eef5fc" stroke="#3a78bd"/><text x="6" y="9.3" text-anchor="middle" font-family="Liberation Sans" font-weight="700" font-size="10.5" fill="#1a3c9c" stroke="#1a3c9c" stroke-width="0.35">e</text></g></svg>
<div class="t" style="left:500px;top:546.73px;font-size:12px;font-weight:400;color:#000;letter-spacing:0px;">updated</div>
<svg class="r" style="left:0px;top:0px" width="1" height="1" viewBox="0 0 1 1"><g transform="translate(481,570)"><rect x="0.5" y="0.5" width="11" height="11" fill="#eef5fc" stroke="#3a78bd"/><text x="6" y="9.3" text-anchor="middle" font-family="Liberation Sans" font-weight="700" font-size="10.5" fill="#1a3c9c" stroke="#1a3c9c" stroke-width="0.35">e</text></g></svg>
<div class="t" style="left:500px;top:564.73px;font-size:12px;font-weight:400;color:#000;letter-spacing:0px;">visibility</div>
<div class="r" style="left:444px;top:146px;width:687px;height:444px;overflow:hidden">
<svg class="r" style="left:-444px;top:-146px" width="1154" height="806"><g transform="translate(481,588)"><rect x="0.5" y="0.5" width="11" height="11" fill="#eef5fc" stroke="#3a78bd"/><text x="6" y="9.3" text-anchor="middle" font-family="Liberation Sans" font-weight="700" font-size="10.5" fill="#1a3c9c" stroke="#1a3c9c" stroke-width="0.35">e</text></g></svg>
<div class="t" style="left:56px;top:436.80px;font-size:12px">workingLocationProperties</div>
</div>
<svg class="r" style="left:0px;top:0px" width="1" height="1" viewBox="0 0 1 1"><path d="M350 150.5 C391.0 150.5 391.0 170 432 170" stroke="#000" stroke-width="1.5" fill="none"/><path d="M350 293.5 C391.0 293.5 391.0 170 432 170" stroke="#000" stroke-width="1.5" fill="none"/><path d="M350 222.5 C391.0 222.5 391.0 451 432 451" stroke="#000" stroke-width="1.1" fill="none"/><path d="M350 222.5 C391.0 222.5 391.0 469 432 469" stroke="#000" stroke-width="1.1" fill="none"/><path d="M350 222.5 C391.0 222.5 391.0 487 432 487" stroke="#000" stroke-width="1.1" fill="none"/><path d="M431 166 L440 170 L431 174 Z" fill="#000"/><path d="M431 447 L440 451 L431 455 Z" fill="#000"/><path d="M431 465 L440 469 L431 473 Z" fill="#000"/><path d="M431 483 L440 487 L431 491 Z" fill="#000"/></svg>
<div class="r" style="left:4px;top:594px;width:434px;height:162px;background:#fff"></div>
<div class="r" style="left:3px;top:594px;width:1px;height:162px;background:#f8f8f8"></div>
<div class="r" style="left:438px;top:596px;width:711px;height:160px;background:#fff"></div>
<div class="r" style="left:1148px;top:596px;width:1px;height:160px;background:#e0e0e0"></div>
<div class="r" style="left:346px;top:594px;width:1px;height:161px;background:#e5e5e5"></div>
<div class="r" style="left:1150px;top:596px;width:1px;height:160px;background:#e8e8e8"></div>
<div class="r" style="left:4px;top:635px;width:1144px;height:1px;background:#e8e8e8"></div>
<div class="r" style="left:4px;top:653px;width:1144px;height:1px;background:#e8e8e8"></div>
<div class="r" style="left:4px;top:671px;width:1144px;height:1px;background:#e8e8e8"></div>
<div class="r" style="left:4px;top:689px;width:1144px;height:1px;background:#e8e8e8"></div>
<div class="r" style="left:4px;top:707px;width:1144px;height:1px;background:#e8e8e8"></div>
<div class="r" style="left:4px;top:725px;width:1144px;height:1px;background:#e8e8e8"></div>
<div class="r" style="left:4px;top:743px;width:1144px;height:1px;background:#e8e8e8"></div>
<div class="r" style="left:2px;top:756px;width:1150px;height:1px;background:#a0a0a0"></div>
<div class="t" style="left:10.5px;top:596.03px;font-size:12px;font-weight:400;color:#000;letter-spacing:0px;">Property</div>
<div class="t" style="left:352px;top:596.03px;font-size:12px;font-weight:400;color:#000;letter-spacing:0px;">Value</div>
<svg class="r" style="left:0px;top:0px" width="1" height="1" viewBox="0 0 1 1"><path d="M10.5 625.2 L14.8 629.7 L19.1 625.2" stroke="#333" stroke-width="1.6" fill="none"/></svg>
<div class="t" style="left:25px;top:617.23px;font-size:12px;font-weight:700;color:#000;letter-spacing:-0.2px;">Basic</div>
<div class="t" style="left:41px;top:634.53px;font-size:12px;font-weight:400;color:#000;letter-spacing:0px;">Path</div>
<div class="t" style="left:352px;top:634.40px;font-size:12.4px;font-weight:400;color:#000;letter-spacing:0px;">/root/attendees/element</div>
<div class="t" style="left:41px;top:652.53px;font-size:12px;font-weight:400;color:#000;letter-spacing:0px;">Object name</div>
<div class="t" style="left:352px;top:652.53px;font-size:12px;font-weight:400;color:#000;letter-spacing:0px;">element</div>
<svg class="r" style="left:16px;top:770px" width="22" height="22" viewBox="0 0 22 22"><circle cx="11" cy="11" r="9.6" fill="#f2f2f2" stroke="#3b5a8a" stroke-width="1.1"/><path d="M7.3 8 C7.2 4.6 15 4.2 15 7.8 C15 10.4 11.2 10.6 11 13.6" stroke="#3b5a8a" stroke-width="2.3" fill="none"/><circle cx="10.9" cy="16.3" r="1.5" fill="#3b5a8a"/></svg>
<div class="r" style="left:953px;top:771px;width:90px;height:23px;border:1px solid #0067c0;border-radius:4px;background:#fdfdfd"></div>
<div class="r" style="left:1051px;top:771px;width:90px;height:23px;border:1px solid #d0d0d0;border-radius:4px;background:#fdfdfd"></div>
<div class="t" style="left:990.3px;top:772.63px;font-size:12px;font-weight:400;color:#000;letter-spacing:0px;">OK</div>
<div class="t" style="left:1078px;top:772.63px;font-size:12px;font-weight:400;color:#000;letter-spacing:0px;">Cancel</div>
</body></html>
